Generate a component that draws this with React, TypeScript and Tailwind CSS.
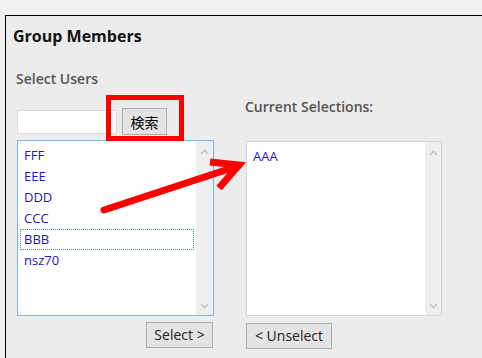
const leftItems = ["FFF", "EEE", "DDD", "CCC", "BBB", "nsz70"];
const rightItems = ["AAA"];

function Chevron({ up }: { up?: boolean }) {
	return (
		<svg width="9" height="6" viewBox="0 0 9 6" className="block">
			<polyline
				points={up ? "1,5 4.5,1.5 8,5" : "1,1 4.5,4.5 8,1"}
				fill="none"
				stroke="#c4c4c4"
				strokeWidth="1.6"
			/>
		</svg>
	);
}

function ListBox({
	items,
	focused,
	activeIndex,
	height,
	trackWidth,
}: {
	items: string[];
	focused?: boolean;
	activeIndex?: number;
	height: string;
	trackWidth: string;
}) {
	return (
		<div
			className={`flex border bg-white ${height} ${
				focused ? "border-[#7eb4ea]" : "border-[#d4d4d4]"
			}`}
		>
			<div className="w-[178px] px-[2px] pt-[4px]">
				{items.map((item, i) => (
					<div
						key={item}
						className={`h-[21px] border pl-[3px] text-[13px] leading-[19px] text-[#1c14d0] ${
							i === activeIndex
								? "border-dotted border-[#3d85d6]"
								: "border-transparent"
						}`}
					>
						{item}
					</div>
				))}
			</div>
			<div
				className={`flex flex-col items-center justify-between bg-[#efefef] pt-[8px] pb-[6px] ${trackWidth}`}
			>
				<Chevron up />
				<Chevron />
			</div>
		</div>
	);
}

function Button({ label, width }: { label: string; width: string }) {
	return (
		<button
			className={`h-[26px] ${width} border border-[#adadad] bg-[#e4e4e4] text-[14px] leading-[24px] text-[#222]`}
		>
			{label}
		</button>
	);
}

export default function App() {
	return (
		<div className="relative h-[358px] w-[482px] overflow-hidden bg-[#f0f0f0] font-['Open_Sans',sans-serif]">
			<div className="h-[15px]" />
			<div className="ml-[5px] h-[343px] border-l border-t border-black bg-[#ececec] pl-[7px] pt-[9px]">
				<h2 className="text-[16px] font-bold leading-[22px] text-[#141414]">
					Group Members
				</h2>

				<div className="mt-[22px] ml-[4px] flex">
					{/* left column */}
					<div className="w-[197px]">
						<div className="-ml-px text-[14px] font-semibold leading-[20px] text-[#555]">
							Select Users
						</div>
						<div className="mt-[19px] flex h-[27px] items-center gap-[5px]">
							<input
								className="h-[24px] w-[100px] border border-[#dadada] bg-white outline-none"
								type="text"
							/>
							<button className="h-[27px] w-[45px] border border-[#adadad] bg-[#e4e4e4] font-['Noto_Sans_CJK_JP',sans-serif] text-[14px] leading-[24px] text-black">
								検索
							</button>
						</div>
						<div className="mt-[5px]">
							<ListBox
								items={leftItems}
								focused
								activeIndex={4}
								height="h-[176px]"
								trackWidth="w-[17px]"
							/>
						</div>
						<div className="mt-[6px] flex justify-end pr-px">
							<Button label="Select >" width="w-[67px]" />
						</div>
					</div>

					{/* right column */}
					<div className="ml-[32px] w-[196px] pt-[28px]">
						<div className="-ml-px text-[14px] font-semibold leading-[20px] text-[#555]">
							Current Selections:
						</div>
						<div className="mt-[24px]">
							<ListBox
								items={rightItems}
								height="h-[175px]"
								trackWidth="w-[16px]"
							/>
						</div>
						<div className="mt-[7px]">
							<Button label="< Unselect" width="w-[86px]" />
						</div>
					</div>
				</div>
			</div>

			{/* annotations */}
			<div className="pointer-events-none absolute left-[106px] top-[95px] h-[46px] w-[78px] border-[5px] border-[#ff0000]" />
			<svg
				className="pointer-events-none absolute left-0 top-0"
				width="482"
				height="358"
			>
				<line
					x1="104"
					y1="210"
					x2="238"
					y2="166"
					stroke="#ff0000"
					strokeWidth="7"
					strokeLinecap="round"
				/>
				<polyline
					points="210,162 239,165 219,188"
					fill="none"
					stroke="#ff0000"
					strokeWidth="7"
					strokeLinejoin="miter"
				/>
			</svg>
		</div>
	);
}
